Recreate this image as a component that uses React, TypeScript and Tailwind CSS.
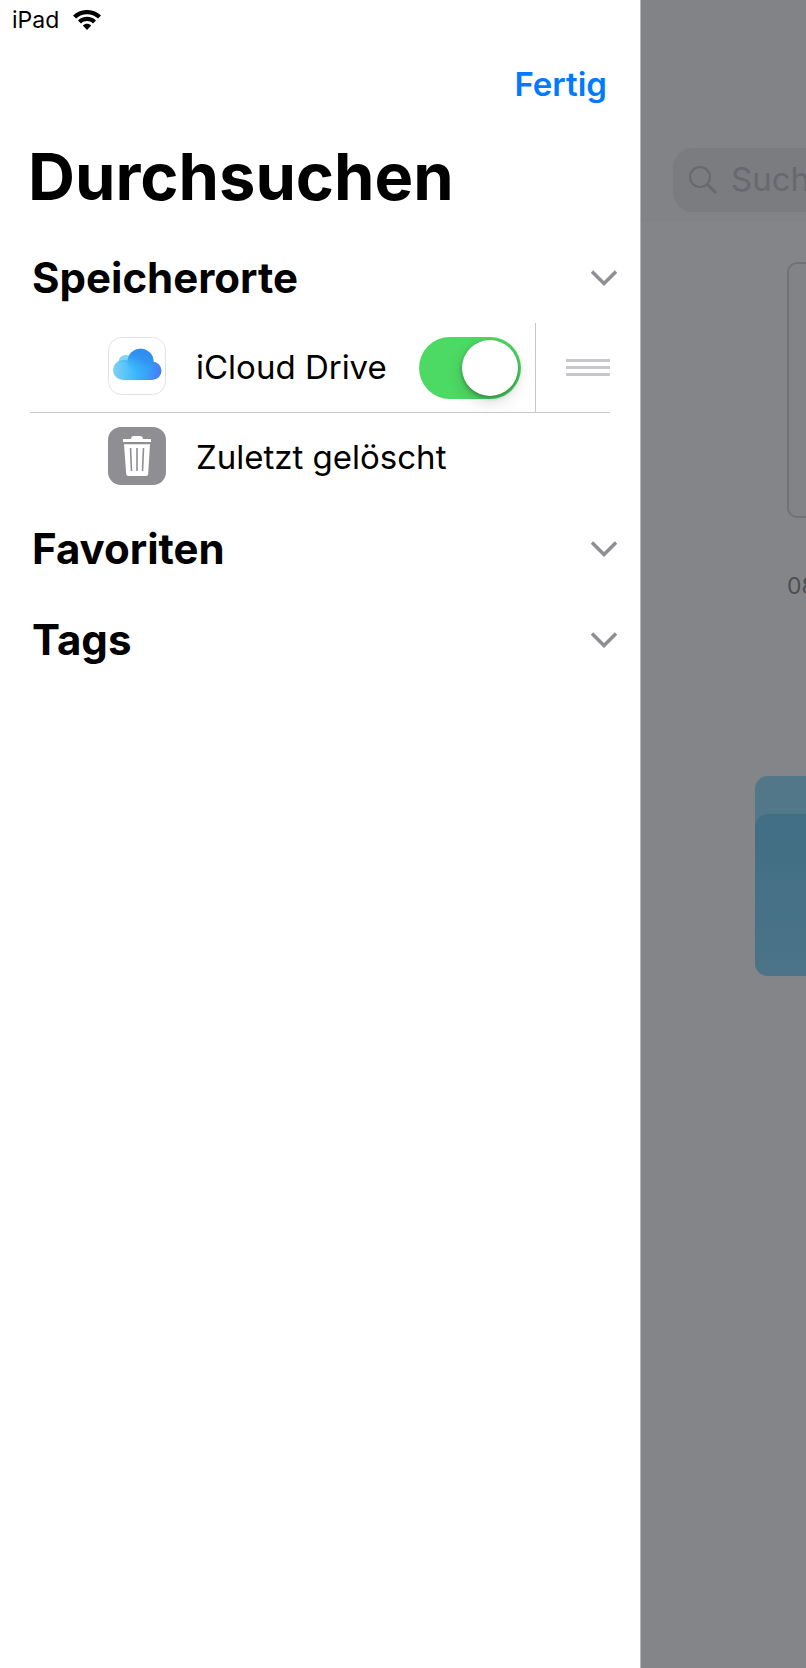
import React, { useState } from "react"

type SectionHeaderProps = {
  title: string
  open: boolean
  onToggle: () => void
}

const WifiIcon = () => (
  <svg width="28" height="20" viewBox="0 0 28 20" aria-hidden="true">
    <path d="M0 5.6C7.6-1.9 20.4-1.9 28 5.6L25 8.6C19 2.7 9 2.7 3 8.6Z" />
    <path d="M5 10.5C10 5.6 18 5.6 23 10.5L20 13.4C16.6 10.2 11.4 10.2 8 13.4Z" />
    <path d="M9.8 15.4C12.2 13.2 15.8 13.2 18.2 15.4L14 20Z" />
  </svg>
)

const CloudIcon = () => (
  <svg width="58" height="58" viewBox="0 0 58 58" aria-hidden="true">
    <defs>
      <linearGradient
        id="cloud"
        gradientUnits="userSpaceOnUse"
        x1="5"
        y1="34"
        x2="53"
        y2="34"
      >
        <stop offset="0" stopColor="#7fd2f4" />
        <stop offset="0.5" stopColor="#38b6fd" />
        <stop offset="1" stopColor="#437df6" />
      </linearGradient>
      <linearGradient id="puff" x1="0.7" y1="0" x2="0.3" y2="1">
        <stop offset="0" stopColor="#2f8bec" />
        <stop offset="0.4" stopColor="#3095f1" />
        <stop offset="1" stopColor="#38b6fd" stopOpacity="0" />
      </linearGradient>
    </defs>
    <rect
      x="0.5"
      y="0.5"
      width="57"
      height="57"
      rx="13"
      fill="#fff"
      stroke="#e2e2e4"
    />
    <circle cx="17.5" cy="25" r="7" fill="#84d4f6" />
    <path
      d="M15 23a10 10 0 0 0 0 20h29.300a9.200 9.200 0 0 0 0-18.400L32 18l-11 5Z"
      fill="url(#cloud)"
    />
    <circle cx="32.500" cy="24.800" r="13" fill="url(#cloud)" />
    <circle cx="32.500" cy="24.800" r="13" fill="url(#puff)" />
    <path
      d="M11 26a7 7 0 0 1 9-2.500l1.500 5a9 9 0 0 0-10.500-2.500Z"
      fill="#45b4ea"
      opacity="0.45"
    />
  </svg>
)

const TrashIcon = () => (
  <svg width="58" height="58" viewBox="0 0 58 58" aria-hidden="true">
    <rect width="58" height="58" rx="13" fill="#8e8e93" />
    <path
      d="M15 12h8c0-2 1.300-3 3-3h6c1.700 0 3 1 3 3h8v3H15Z"
      fill="#fff"
    />
    <path
      d="M16 17.200h26l-1.800 29.600c0 1.400-1 2.200-2.200 2.200H20.500c-1.300 0-2.200-.8-2.300-2.200Z"
      fill="#fff"
    />
    <path
      d="M22.500 21l1 23M29 21v23M35.500 21l-1 23"
      stroke="#8e8e93"
      strokeWidth="1.600"
    />
  </svg>
)

const SectionHeader = ({ title, open, onToggle }: SectionHeaderProps) => (
  <h2>
    <button
      className="flex h-[91px] w-full items-center justify-between pl-8 pr-[23px] text-[42px] font-bold"
      aria-expanded={open}
      onClick={onToggle}
    >
      {title}
      <svg
        width="26"
        height="18"
        viewBox="0 0 26 18"
        fill="none"
        stroke="#8e8e93"
        strokeWidth="3.500"
        aria-hidden="true"
      >
        <path d="M1 2.500l12 12L25 2.500" />
      </svg>
    </button>
  </h2>
)

const Sidebar = () => {
  const [cloudEnabled, setCloudEnabled] = useState(true)
  const [open, setOpen] = useState({
    locations: true,
    favorites: false,
    tags: false,
  })

  return (
    <aside className="w-4/5 max-w-[641px] shrink-0 border-r border-[#b5b6ba] bg-white">
      <div className="flex h-10 items-center gap-3.5 pl-3 text-[23px]">
        <span>iPad</span>
        <WifiIcon />
      </div>

      <div className="flex h-[90px] items-center justify-end pr-[33px]">
        <button className="text-[33px] font-semibold text-[#007aff]">
          Fertig
        </button>
      </div>
      <h1 className="flex h-[102px] items-center pl-7 pb-2 text-[65px] font-bold">
        Durchsuchen
      </h1>

      <SectionHeader
        title="Speicherorte"
        open={open.locations}
        onToggle={() => setOpen({ ...open, locations: !open.locations })}
      />
      {open.locations && (
        <ul className="text-[33px]">
          <li className="mr-[30px] ml-[30px] flex h-[90px] items-center border-b border-[#c8c7cc] pl-[78px]">
            <div className="pb-1">
              <CloudIcon />
            </div>
            <label htmlFor="icloud" className="ml-[30px] flex-1">
              iCloud Drive
            </label>
            <span className="relative flex h-[62px] w-[102px]">
              <input
                id="icloud"
                type="checkbox"
                role="switch"
                checked={cloudEnabled}
                onChange={(e) => setCloudEnabled(e.target.checked)}
                className="peer h-full w-full appearance-none rounded-full bg-[#e5e5ea] checked:bg-[#4cd964]"
              />
              <span className="pointer-events-none absolute top-[3px] left-[3px] h-14 w-14 rounded-full bg-white shadow-[0_6px_16px_rgba(0,0,0,0.15),0_2px_4px_rgba(0,0,0,0.3)] peer-checked:left-[43px]" />
            </span>
            <button
              className="ml-3.5 flex h-full flex-col justify-center gap-1 border-l border-[#c8c7cc] pl-[30px]"
              aria-label="iCloud Drive verschieben"
            >
              <span className="h-[3px] w-11 bg-[#c7c7cc]" />
              <span className="h-[3px] w-11 bg-[#c7c7cc]" />
              <span className="h-[3px] w-11 bg-[#c7c7cc]" />
            </button>
          </li>
          <li className="flex h-[90px] items-center gap-[30px] pl-[108px]">
            <div className="pb-1">
              <TrashIcon />
            </div>
            <span>Zuletzt gelöscht</span>
          </li>
        </ul>
      )}
      <SectionHeader
        title="Favoriten"
        open={open.favorites}
        onToggle={() => setOpen({ ...open, favorites: !open.favorites })}
      />
      <SectionHeader
        title="Tags"
        open={open.tags}
        onToggle={() => setOpen({ ...open, tags: !open.tags })}
      />
    </aside>
  )
}

// dimmed file browser behind the sidebar
const Browser = () => (
  <main className="min-w-0 flex-1 overflow-hidden bg-[#848589]">
    <div className="h-[222px] bg-[#828387] pt-[148px] pl-8">
      <label className="flex h-16 items-center gap-3.5 overflow-hidden rounded-l-[20px] bg-[#7b7c80] pl-4 text-[#68696d]">
        <svg
          width="28"
          height="28"
          viewBox="0 0 28 28"
          fill="none"
          stroke="currentColor"
          className="shrink-0"
          aria-hidden="true"
        >
          <circle cx="11" cy="11" r="10" strokeWidth="2" />
          <path d="M18.500 18.500L27 27" strokeWidth="3" />
        </svg>
        <input
          type="text"
          placeholder="Suchen"
          aria-label="Suchen"
          className="h-full min-w-32 flex-1 bg-transparent pb-0.5 text-[33px] outline-none placeholder:text-[#68696d]"
        />
      </label>
    </div>
    <div className="mt-10 ml-[146px]">
      <div className="h-64 rounded-l-[10px] border-2 border-r-0 border-[#717276] bg-[#828387]" />
      <p className="mt-[50px] text-[23px]/9 text-[#4d4e52]">08</p>
    </div>
    <div className="mt-[172px] ml-[114px] h-[200px] rounded-l-[13px] bg-[#517789] pt-[38px]">
      <div className="h-full rounded-l-[13px] bg-linear-to-b from-[#406e84] to-[#4c7388]" />
    </div>
  </main>
)

const App = () => {
  return (
    <div className="flex min-h-screen overflow-hidden bg-white font-['Inter',sans-serif] text-black">
      <Sidebar />
      <Browser />
    </div>
  )
}

export default App
